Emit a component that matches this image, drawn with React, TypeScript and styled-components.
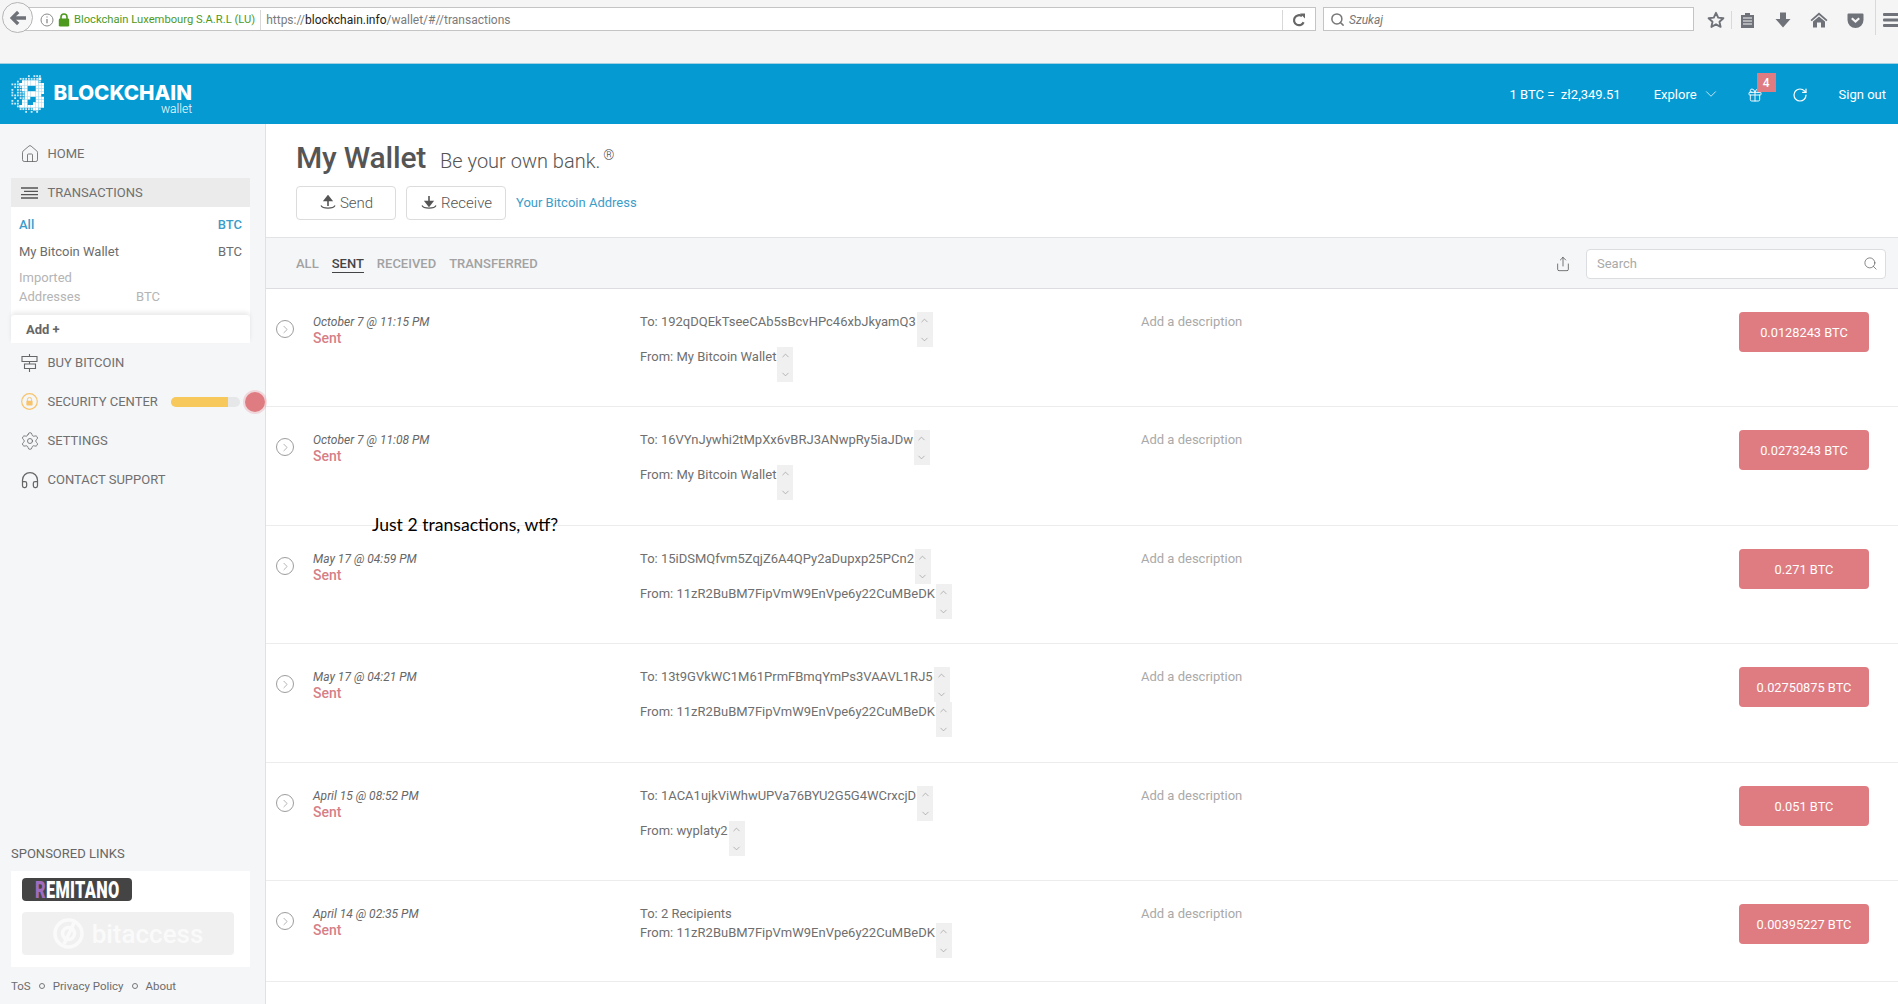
import React from 'react';
import styled, { createGlobalStyle } from 'styled-components';
import {
  ChevronDown,
  ChevronRight,
  ChevronUp,
  Gift,
  Headphones,
  House,
  RotateCw,
  Search,
  Settings,
  Share,
} from 'lucide-react';

const colors = {
  blue: '#069ad3',
  link: '#3b9cc9',
  red: '#de7c82',
  redText: '#d67f87',
  panel: '#f5f6f8',
  line: '#e2e3e5',
  text: '#6f6f6f',
  muted: '#a9a9a9',
};

const GlobalStyle = createGlobalStyle`
  html, body {
    margin: 0;
    height: 100%;
    overflow: hidden;
    background: #fff;
  }
  body {
    font-family: Roboto, "Liberation Sans", sans-serif;
    font-size: 13px;
    color: ${colors.text};
  }
`;

const Page = styled.div`
  position: relative;
  width: 1898px;
  height: 1004px;
  display: flex;
  flex-direction: column;
  overflow: hidden;
`;

/* browser chrome */
const Chrome = styled.div`
  height: 64px;
  flex: none;
  box-sizing: border-box;
  background: #f5f5f5;
  border-bottom: 1px solid #a4d0e2;
  display: flex;
  align-items: flex-start;
  padding: 2px 0 0 2px;
`;

const BackButton = styled.div`
  width: 31px;
  height: 31px;
  flex: none;
  box-sizing: border-box;
  border: 1px solid #b5b5b5;
  border-radius: 50%;
  background: #f7f7f7;
  display: flex;
  align-items: center;
  justify-content: center;
  z-index: 1;
`;

const AddressBar = styled.div`
  width: 1299px;
  height: 24px;
  flex: none;
  box-sizing: border-box;
  margin: 5px 0 0 -16px;
  padding: 1px 0 0 22px;
  background: #fff;
  border: 1px solid #c4c4c4;
  display: flex;
  align-items: center;
  font-size: 11.2px;
`;

const Identity = styled.span`
  margin-left: 4px;
  color: #4d9a1e;
  white-space: nowrap;
`;

const BarDivider = styled.span<{ $gap?: number }>`
  width: 1px;
  height: 20px;
  margin-left: ${(p) => p.$gap ?? 0}px;
  background: #d8d8d8;
  flex: none;
`;

const Url = styled.span`
  margin-left: 5px;
  color: #7b7b7b;
  font-size: 12px;
  flex: 1;
  b {
    font-weight: 400;
    color: #222;
  }
`;

const ReloadBox = styled.span`
  width: 32px;
  display: flex;
  justify-content: center;
`;

const BrowserSearch = styled.div`
  width: 371px;
  height: 24px;
  flex: none;
  box-sizing: border-box;
  margin: 5px 0 0 7px;
  padding: 1px 0 0 6px;
  background: #fff;
  border: 1px solid #c4c4c4;
  display: flex;
  align-items: center;
  gap: 4px;
  font-size: 12px;
  font-style: italic;
  color: #777;
`;

const ToolIcons = styled.div`
  display: flex;
  flex: none;
  align-items: center;
  height: 24px;
  margin: 6px 0 0 12px;
`;

const ToolDivider = styled.span<{ $tall?: boolean }>`
  width: 1px;
  height: ${(p) => (p.$tall ? '38px' : '18px')};
  margin: ${(p) => (p.$tall ? '-8px 7px 0 10px' : '0 5px')};
  background: #d9d9d9;
  flex: none;
`;

const ToolSlot = styled.span`
  width: 20px;
  height: 20px;
  flex: none;
  display: flex;
  align-items: center;
  justify-content: center;
  & + & {
    margin-left: 16px;
  }
`;

/* blue wallet bar */
const TopBar = styled.header`
  height: 60px;
  flex: none;
  background: ${colors.blue};
  color: #fff;
  display: flex;
  align-items: center;
  padding: 0 12px 0 11px;
`;

const Brand = styled.div`
  display: flex;
  align-items: center;
  gap: 10px;
  flex: 1;
`;

const BrandText = styled.div`
  width: 138px;
  display: flex;
  flex-direction: column;
  align-items: flex-end;
  margin-top: 9px;
`;

const BrandName = styled.span`
  font-family: Inter, sans-serif;
  font-weight: 800;
  font-size: 20.6px;
  line-height: 20px;
  white-space: nowrap;
`;

const BrandSub = styled.span`
  font-size: 12px;
  line-height: 12px;
  font-weight: 300;
`;

const Rate = styled.span`
  margin-right: 33px;
  white-space: pre;
`;

const Explore = styled.span`
  display: flex;
  align-items: center;
  gap: 5px;
  margin-right: 27px;
`;

const GiftSlot = styled.span`
  position: relative;
  display: flex;
  margin-right: 29px;
  top: 1px;
`;

const Badge = styled.span`
  position: absolute;
  left: 10px;
  top: -14px;
  width: 19px;
  height: 19px;
  background: ${colors.red};
  font-size: 12px;
  font-weight: 500;
  display: flex;
  align-items: center;
  justify-content: center;
`;

const RefreshSlot = styled.span`
  display: flex;
  margin-right: 31px;
  position: relative;
  top: 1px;
`;

/* page body */
const Body = styled.div`
  flex: 1;
  display: flex;
  min-height: 0;
`;

const Sidebar = styled.aside`
  width: 266px;
  flex: none;
  box-sizing: border-box;
  padding-top: 10px;
  background: ${colors.panel};
  border-right: 1px solid #dfe1e4;
  display: flex;
  flex-direction: column;
`;

const NavItem = styled.div<{ $active?: boolean }>`
  height: ${(p) => (p.$active ? '29px' : '39px')};
  margin: ${(p) => (p.$active ? '5px 15px 0 11px' : '0 0 0 11px')};
  padding-left: 10px;
  display: flex;
  align-items: center;
  gap: 9.5px;
  background: ${(p) => (p.$active ? '#ebebeb' : 'transparent')};
  color: #707070;
  font-size: 13px;
  white-space: nowrap;
`;

const NavIcon = styled.span`
  width: 17px;
  height: 17px;
  flex: none;
  display: flex;
  align-items: center;
  justify-content: center;
  color: #666;
  svg {
    flex: none;
  }
`;

const WalletPanel = styled.div`
  margin: 0 15px 0 11px;
  padding-top: 4px;
  background: #fff;
  display: flex;
  flex-direction: column;
`;

const WalletRow = styled.div<{ $selected?: boolean }>`
  height: 27px;
  padding: 0 8px;
  display: flex;
  align-items: center;
  justify-content: space-between;
  color: ${(p) => (p.$selected ? colors.link : '#6c6c6c')};
  font-weight: ${(p) => (p.$selected ? 500 : 400)};
`;

const ImportedRow = styled.div`
  height: 38px;
  margin-top: 3px;
  padding: 0 8px;
  display: flex;
  align-items: flex-end;
  line-height: 19px;
  color: #b4b4b4;
`;

const ImportedLabel = styled.span`
  width: 117px;
`;

const AddRow = styled.div`
  height: 28px;
  margin-top: 9px;
  padding: 1px 0 0 15px;
  box-sizing: border-box;
  display: flex;
  align-items: center;
  font-weight: 700;
  color: #666;
  border-radius: 4px 4px 0 0;
  box-shadow: 0 -3px 4px rgba(0, 0, 0, 0.08);
`;

const SecurityBar = styled.span`
  width: 69px;
  height: 10px;
  margin-left: 4px;
  border-radius: 5px;
  background: #e6e7e9;
  overflow: hidden;
  flex: none;
  display: flex;
`;

const SecurityFill = styled.span`
  background: #f7c95c;
`;

const AlertDot = styled.span`
  width: 20px;
  height: 20px;
  margin-left: -4.5px;
  border-radius: 50%;
  background: ${colors.red};
  box-shadow: 0 0 0 2px rgba(222, 124, 130, 0.25);
  flex: none;
`;

const SponsoredLabel = styled.div`
  margin: auto 0 7px 11px;
  line-height: 20px;
  color: #666;
`;

const SponsoredBox = styled.div`
  margin: 0 15px 0 11px;
  padding: 7px 16px 12px 11px;
  background: #fff;
  display: flex;
  flex-direction: column;
  gap: 11px;
`;

const Remitano = styled.div`
  width: 110px;
  height: 23px;
  border-radius: 4px;
  background: #444;
  color: #fff;
  display: flex;
  align-items: center;
  justify-content: center;
  font-weight: 900;
  font-size: 24px;
  letter-spacing: 0.5px;
`;

const RemitanoWord = styled.span`
  flex: none;
  margin: 0 -30px;
  transform: scaleX(0.68);
  white-space: nowrap;
  i {
    font-style: normal;
    color: #a06cc0;
  }
`;

const Bitaccess = styled.div`
  height: 43px;
  border-radius: 4px;
  background: #f0f0f0;
  color: #fafafa;
  display: flex;
  align-items: center;
  justify-content: center;
  gap: 8px;
  font-size: 26px;
  font-weight: 500;
`;

const SideFooter = styled.div`
  height: 37px;
  margin-left: 11px;
  display: flex;
  align-items: center;
  gap: 8px;
  font-size: 11.5px;
  color: #6d6d6d;
`;

const FooterDot = styled.span`
  width: 6px;
  height: 6px;
  box-sizing: border-box;
  border: 1px solid #777;
  border-radius: 50%;
`;

/* main column */
const Main = styled.main`
  flex: 1;
  min-width: 0;
  display: flex;
  flex-direction: column;
`;

const WalletHead = styled.div`
  height: 114px;
  flex: none;
  box-sizing: border-box;
  padding: 16px 0 0 30px;
  border-bottom: 1px solid ${colors.line};
`;

const TitleRow = styled.div`
  height: 36px;
  display: flex;
  align-items: baseline;
  gap: 14px;
  white-space: nowrap;
`;

const Title = styled.h1`
  margin: 0;
  font-size: 30px;
  font-weight: 500;
  line-height: 36px;
  letter-spacing: -0.2px;
  color: #555;
`;

const Tagline = styled.span`
  font-size: 20px;
  font-weight: 300;
  color: #555;
  sup {
    font-size: 14px;
    margin-left: 3px;
    line-height: 0;
  }
`;

const Actions = styled.div`
  margin-top: 10px;
  display: flex;
  align-items: center;
  gap: 10px;
`;

const ActionButton = styled.button`
  width: 100px;
  height: 34px;
  padding: 0;
  background: #fff;
  border: 1px solid #dcdcdc;
  border-radius: 4px;
  font: 300 15px Roboto, sans-serif;
  color: #555;
  display: flex;
  align-items: center;
  justify-content: center;
  gap: 3px;
`;

const LinkText = styled.a`
  color: ${colors.link};
  font-size: 13px;
  position: relative;
  top: -1px;
`;

const FilterBar = styled.div`
  height: 51px;
  flex: none;
  box-sizing: border-box;
  padding: 1px 12px 0 30px;
  background: ${colors.panel};
  border-bottom: 1px solid #dcdde0;
  display: flex;
  align-items: center;
  gap: 13px;
`;

const FilterTab = styled.span<{ $active?: boolean }>`
  font-size: 13px;
  font-weight: 500;
  line-height: 16px;
  color: ${(p) => (p.$active ? '#444' : '#a2a2a2')};
  border-bottom: 1px solid ${(p) => (p.$active ? '#444' : 'transparent')};
  padding-top: 1px;
`;

const ExportSlot = styled.span`
  margin: 0 2px 0 auto;
  display: flex;
`;

const SearchBox = styled.div`
  width: 300px;
  height: 30px;
  box-sizing: border-box;
  padding: 0 7px 0 10px;
  background: #fff;
  border: 1px solid #dcdde0;
  border-radius: 4px;
  display: flex;
  align-items: center;
  justify-content: space-between;
  color: #a9a9a9;
`;

const Row = styled.div<{ $height: number }>`
  height: ${(p) => p.$height}px;
  flex: none;
  box-sizing: border-box;
  padding: 23px 29px 0 10px;
  border-bottom: 1px solid #ececec;
  display: grid;
  grid-template-columns: 37px 327px 501px 1fr auto;
  align-items: start;
`;

const RowToggle = styled.span`
  width: 18px;
  height: 18px;
  margin-top: 8px;
  box-sizing: border-box;
  border: 1px solid #9d9d9d;
  border-radius: 50%;
  display: flex;
  align-items: center;
  justify-content: center;
  color: #8c8c8c;
`;

const DateCell = styled.div`
  padding-top: 1px;
`;

const DateText = styled.div`
  font-size: 12px;
  font-style: italic;
  line-height: 18px;
  color: #666;
`;

const SentLabel = styled.div`
  font-size: 14px;
  font-weight: 500;
  line-height: 15px;
  color: ${colors.redText};
`;

const AddressLine = styled.div`
  display: flex;
  align-items: flex-start;
  line-height: 19px;
  white-space: nowrap;
`;

const MiniScroll = styled.span`
  width: 16px;
  height: 35px;
  margin-left: 1px;
  background: #f0f0f0;
  color: #999;
  display: flex;
  flex-direction: column;
  align-items: center;
  justify-content: space-between;
  padding: 3px 0 2px;
  box-sizing: border-box;
`;

const Description = styled.div`
  line-height: 19px;
  color: ${colors.muted};
`;

const Amount = styled.div`
  width: 130px;
  height: 40px;
  border-radius: 4px;
  background: ${colors.red};
  color: #fff;
  display: flex;
  align-items: center;
  justify-content: center;
  font-size: 12.8px;
`;

const Annotation = styled.div`
  position: absolute;
  left: 372px;
  top: 514px;
  font-family: Lato, sans-serif;
  font-size: 17.6px;
  line-height: 22px;
  color: #000;
`;

const LOGO = [
  '......:.:::.',
  '...:::::::#.',
  '..:.######:.',
  ':::#########',
  '.:::##...###',
  ':.::##...###',
  ':.:::#######',
  ':::::######.',
  '.:.::##..###',
  ':.:.##...###',
  ':::.##..####',
  '..:#########',
  '...:::::##:.',
  '.....:.:.:..',
];

const LogoMark = () => (
  <svg width="33" height="40" viewBox="0 0 36 42" fill="#fff">
    {LOGO.flatMap((line, y) =>
      line.split('').map((cell, x) =>
        cell === '.' ? null : cell === '#' ? (
          <rect key={`${x}-${y}`} x={x * 3} y={y * 3} width="3" height="3" />
        ) : (
          <rect key={`${x}-${y}`} x={x * 3 + 0.5} y={y * 3 + 0.5} width="2" height="2" opacity="0.8" />
        ),
      ),
    )}
  </svg>
);

const BackArrow = () => (
  <svg width="18" height="16" viewBox="0 0 18 16" fill="#6f7278">
    <path d="M8 0.8 L10.4 3.2 L7 6.3 H17 V9.7 H7 L10.4 12.8 L8 15.2 L0.8 8 Z" />
  </svg>
);

const InfoIcon = () => (
  <svg width="14" height="14" viewBox="0 0 14 14" fill="none" stroke="#8a8a8a">
    <circle cx="7" cy="7" r="6" />
    <path d="M7 6v4.2M7 3.4v1.2" strokeWidth="1.3" />
  </svg>
);

const LockGlyph = styled.svg`
  margin-left: 4px;
  flex: none;
`;

const GreenLock = () => (
  <LockGlyph width="12" height="14" viewBox="0 0 12 14">
    <path d="M3 6V4a3 3 0 0 1 6 0v2" fill="none" stroke="#4d9a1e" strokeWidth="1.6" />
    <rect x="0.8" y="5.6" width="10.4" height="8" rx="1.4" fill="#4d9a1e" />
  </LockGlyph>
);

const ReloadIcon = () => (
  <svg width="14" height="14" viewBox="0 0 14 14" fill="none" stroke="#666" strokeWidth="2.2">
    <path d="M11.6 9.2A5 5 0 1 1 10 3.2" />
    <path d="M8 0.6 13 0.6 13 5.6Z" fill="#666" stroke="none" />
  </svg>
);

const StarIcon = () => (
  <svg width="18" height="18" viewBox="0 0 18 18" fill="none" stroke="#6f7278" strokeWidth="1.9" strokeLinejoin="round">
    <path d="M9 1.8 11.2 6.6 16.4 7.2 12.5 10.7 13.6 15.9 9 13.3 4.4 15.9 5.5 10.7 1.6 7.2 6.8 6.6Z" />
  </svg>
);

const ReadingListIcon = () => (
  <svg width="15" height="17" viewBox="0 0 15 17">
    <path d="M1 3h4V1h5v2h4v13H1Z" fill="#6f7278" />
    <path d="M3 6h9M3 9h9M3 12h9" stroke="#f5f5f5" strokeWidth="1.1" />
  </svg>
);

const DownloadIcon = () => (
  <svg width="16" height="16" viewBox="0 0 16 16" fill="#6f7278">
    <path d="M5 0.5h6V7h4.5L8 15.5 0.5 7H5Z" />
  </svg>
);

const ToolHomeIcon = () => (
  <svg width="18" height="16" viewBox="0 0 18 16" fill="#6f7278">
    <path d="M9 0.5 17.5 8 16.3 9.2 9 3 1.7 9.2 0.5 8Z" />
    <path d="M9 4.6 15 9.6V15.5H11V10.5H7V15.5H3V9.6Z" />
  </svg>
);

const PocketIcon = () => (
  <svg width="17" height="15" viewBox="0 0 17 15">
    <path d="M1.5 0.5h14a1 1 0 0 1 1 1V7a8 8 0 0 1-16 0V1.5a1 1 0 0 1 1-1Z" fill="#6f7278" />
    <path d="M4.8 5.2 8.5 8.6 12.2 5.2" fill="none" stroke="#f5f5f5" strokeWidth="2.2" />
  </svg>
);

const MenuIcon = () => (
  <svg width="20" height="16" viewBox="0 0 20 16" fill="#6f7278">
    <rect y="1" width="20" height="3" rx="1" />
    <rect y="6.5" width="20" height="3" rx="1" />
    <rect y="12" width="20" height="3" rx="1" />
  </svg>
);

const LinesIcon = () => (
  <svg width="17" height="12" viewBox="0 0 17 12" stroke="#555" strokeWidth="1.3">
    <path d="M0 1h17M3 4.4h14M0 7.6h17M0 11h17" />
  </svg>
);

const SignIcon = () => (
  <svg width="17" height="18" viewBox="0 0 17 18" fill="none" stroke="#666" strokeWidth="1.1">
    <path d="M1 2.5h15v5H1ZM3.5 10h11v4.5h-11ZM8.5 0v2.5M8.5 7.5V10M8.5 14.5V18" />
  </svg>
);

const SecurityIcon = () => (
  <svg width="17" height="17" viewBox="0 0 17 17">
    <circle cx="8.5" cy="8.5" r="7.8" fill="none" stroke="#f7c46c" strokeWidth="1.2" />
    <path d="M6.4 8V6.6a2.1 2.1 0 0 1 4.2 0V8" fill="none" stroke="#f7c46c" />
    <rect x="5.4" y="7.8" width="6.2" height="4.6" rx="0.6" fill="#f7c46c" />
  </svg>
);

const SendArrow = ({ down }: { down?: boolean }) => (
  <svg width="18" height="16" viewBox="0 0 18 16" fill="none" stroke="#555">
    <path d="M2 10.5c1.5 3.5 12.5 3.5 14 0" strokeWidth="1.2" />
    <path
      d={down ? 'M9 1v9M9 11 5.5 6.5h7Z' : 'M9 11V2M9 1 5.5 5.5h7Z'}
      fill="#555"
      strokeWidth="1.6"
    />
  </svg>
);

const BitaccessMark = () => (
  <svg width="31" height="31" viewBox="0 0 31 31" fill="none" stroke="#fafafa" strokeWidth="3.5">
    <circle cx="15.5" cy="15.5" r="13.5" />
    <circle cx="15.5" cy="15.5" r="6" />
    <path d="M21 5 11 26" />
  </svg>
);

type Tx = {
  date: string;
  to: string;
  toScroll?: boolean;
  from: string;
  amount: string;
  height: number;
};

const MAIN_ADDR = '11zR2BuBM7FipVmW9EnVpe6y22CuMBeDK';

const TRANSACTIONS: Tx[] = [
  { date: 'October 7 @ 11:15 PM', to: '192qDQEkTseeCAb5sBcvHPc46xbJkyamQ3', toScroll: true, from: 'My Bitcoin Wallet', amount: '0.0128243 BTC', height: 118 },
  { date: 'October 7 @ 11:08 PM', to: '16VYnJywhi2tMpXx6vBRJ3ANwpRy5iaJDw', toScroll: true, from: 'My Bitcoin Wallet', amount: '0.0273243 BTC', height: 119 },
  { date: 'May 17 @ 04:59 PM', to: '15iDSMQfvm5ZqjZ6A4QPy2aDupxp25PCn2', toScroll: true, from: MAIN_ADDR, amount: '0.271 BTC', height: 118 },
  { date: 'May 17 @ 04:21 PM', to: '13t9GVkWC1M61PrmFBmqYmPs3VAAVL1RJ5', toScroll: true, from: MAIN_ADDR, amount: '0.02750875 BTC', height: 119 },
  { date: 'April 15 @ 08:52 PM', to: '1ACA1ujkViWhwUPVa76BYU2G5G4WCrxcjD', toScroll: true, from: 'wyplaty2', amount: '0.051 BTC', height: 118 },
  { date: 'April 14 @ 02:35 PM', to: '2 Recipients', from: MAIN_ADDR, amount: '0.00395227 BTC', height: 101 },
];

const ScrollStub = () => (
  <MiniScroll>
    <ChevronUp size={11} strokeWidth={1.5} />
    <ChevronDown size={11} strokeWidth={1.5} />
  </MiniScroll>
);

const TxRow = ({ tx }: { tx: Tx }) => (
  <Row $height={tx.height}>
    <RowToggle>
      <ChevronRight size={13} strokeWidth={1.2} />
    </RowToggle>
    <DateCell>
      <DateText>{tx.date}</DateText>
      <SentLabel>Sent</SentLabel>
    </DateCell>
    <div>
      <AddressLine>
        To: {tx.to}
        {tx.toScroll && <ScrollStub />}
      </AddressLine>
      <AddressLine>
        From: {tx.from}
        <ScrollStub />
      </AddressLine>
    </div>
    <Description>Add a description</Description>
    <Amount>{tx.amount}</Amount>
  </Row>
);

const App: React.FC = () => (
  <Page>
    <GlobalStyle />
    <Chrome>
      <BackButton>
        <BackArrow />
      </BackButton>
      <AddressBar>
        <InfoIcon />
        <GreenLock />
        <Identity>Blockchain Luxembourg S.A.R.L (LU)</Identity>
        <BarDivider $gap={5} />
        <Url>
          https://<b>blockchain.info</b>/wallet/#//transactions
        </Url>
        <BarDivider />
        <ReloadBox>
          <ReloadIcon />
        </ReloadBox>
      </AddressBar>
      <BrowserSearch>
        <Search size={15} color="#777" strokeWidth={2.4} />
        Szukaj
      </BrowserSearch>
      <ToolIcons>
        <ToolSlot>
          <StarIcon />
        </ToolSlot>
        <ToolDivider />
        <ToolSlot>
          <ReadingListIcon />
        </ToolSlot>
        <ToolSlot>
          <DownloadIcon />
        </ToolSlot>
        <ToolSlot>
          <ToolHomeIcon />
        </ToolSlot>
        <ToolSlot>
          <PocketIcon />
        </ToolSlot>
        <ToolDivider $tall />
        <ToolSlot>
          <MenuIcon />
        </ToolSlot>
      </ToolIcons>
    </Chrome>

    <TopBar>
      <Brand>
        <LogoMark />
        <BrandText>
          <BrandName>BLOCKCHAIN</BrandName>
          <BrandSub>wallet</BrandSub>
        </BrandText>
      </Brand>
      <Rate>1 BTC =  zł2,349.51</Rate>
      <Explore>
        Explore
        <ChevronDown size={18} strokeWidth={1} />
      </Explore>
      <GiftSlot>
        <Gift size={16} strokeWidth={1.4} />
        <Badge>4</Badge>
      </GiftSlot>
      <RefreshSlot>
        <RotateCw size={16} strokeWidth={1.8} />
      </RefreshSlot>
      <span>Sign out</span>
    </TopBar>

    <Body>
      <Sidebar>
        <NavItem>
          <NavIcon>
            <House size={20} strokeWidth={1} />
          </NavIcon>
          HOME
        </NavItem>
        <NavItem $active>
          <NavIcon>
            <LinesIcon />
          </NavIcon>
          TRANSACTIONS
        </NavItem>
        <WalletPanel>
          <WalletRow $selected>
            <span>All</span>
            <span>BTC</span>
          </WalletRow>
          <WalletRow>
            <span>My Bitcoin Wallet</span>
            <span>BTC</span>
          </WalletRow>
          <ImportedRow>
            <ImportedLabel>
              Imported
              <br />
              Addresses
            </ImportedLabel>
            <span>BTC</span>
          </ImportedRow>
          <AddRow>Add +</AddRow>
        </WalletPanel>
        <NavItem>
          <NavIcon>
            <SignIcon />
          </NavIcon>
          BUY BITCOIN
        </NavItem>
        <NavItem>
          <NavIcon>
            <SecurityIcon />
          </NavIcon>
          SECURITY CENTER
          <SecurityBar>
            <SecurityFill style={{ width: `${(57 / 69) * 100}%` }} />
          </SecurityBar>
          <AlertDot />
        </NavItem>
        <NavItem>
          <NavIcon>
            <Settings size={20} strokeWidth={1} />
          </NavIcon>
          SETTINGS
        </NavItem>
        <NavItem>
          <NavIcon>
            <Headphones size={20} strokeWidth={1.5} />
          </NavIcon>
          CONTACT SUPPORT
        </NavItem>

        <SponsoredLabel>SPONSORED LINKS</SponsoredLabel>
        <SponsoredBox>
          <Remitano>
            <RemitanoWord>
              <i>R</i>EMITANO
            </RemitanoWord>
          </Remitano>
          <Bitaccess>
            <BitaccessMark />
            bitaccess
          </Bitaccess>
        </SponsoredBox>
        <SideFooter>
          <span>ToS</span>
          <FooterDot />
          <span>Privacy Policy</span>
          <FooterDot />
          <span>About</span>
        </SideFooter>
      </Sidebar>

      <Main>
        <WalletHead>
          <TitleRow>
            <Title>My Wallet</Title>
            <Tagline>
              Be your own bank.
              <sup>®</sup>
            </Tagline>
          </TitleRow>
          <Actions>
            <ActionButton>
              <SendArrow />
              Send
            </ActionButton>
            <ActionButton>
              <SendArrow down />
              Receive
            </ActionButton>
            <LinkText>Your Bitcoin Address</LinkText>
          </Actions>
        </WalletHead>

        <FilterBar>
          <FilterTab>ALL</FilterTab>
          <FilterTab $active>SENT</FilterTab>
          <FilterTab>RECEIVED</FilterTab>
          <FilterTab>TRANSFERRED</FilterTab>
          <ExportSlot>
            <Share size={16} strokeWidth={1.1} color="#444" />
          </ExportSlot>
          <SearchBox>
            Search
            <Search size={15} strokeWidth={1.1} color="#555" />
          </SearchBox>
        </FilterBar>

        {TRANSACTIONS.map((tx) => (
          <TxRow key={tx.date} tx={tx} />
        ))}
      </Main>
    </Body>

    <Annotation>Just 2 transactions, wtf?</Annotation>
  </Page>
);

export default App;
